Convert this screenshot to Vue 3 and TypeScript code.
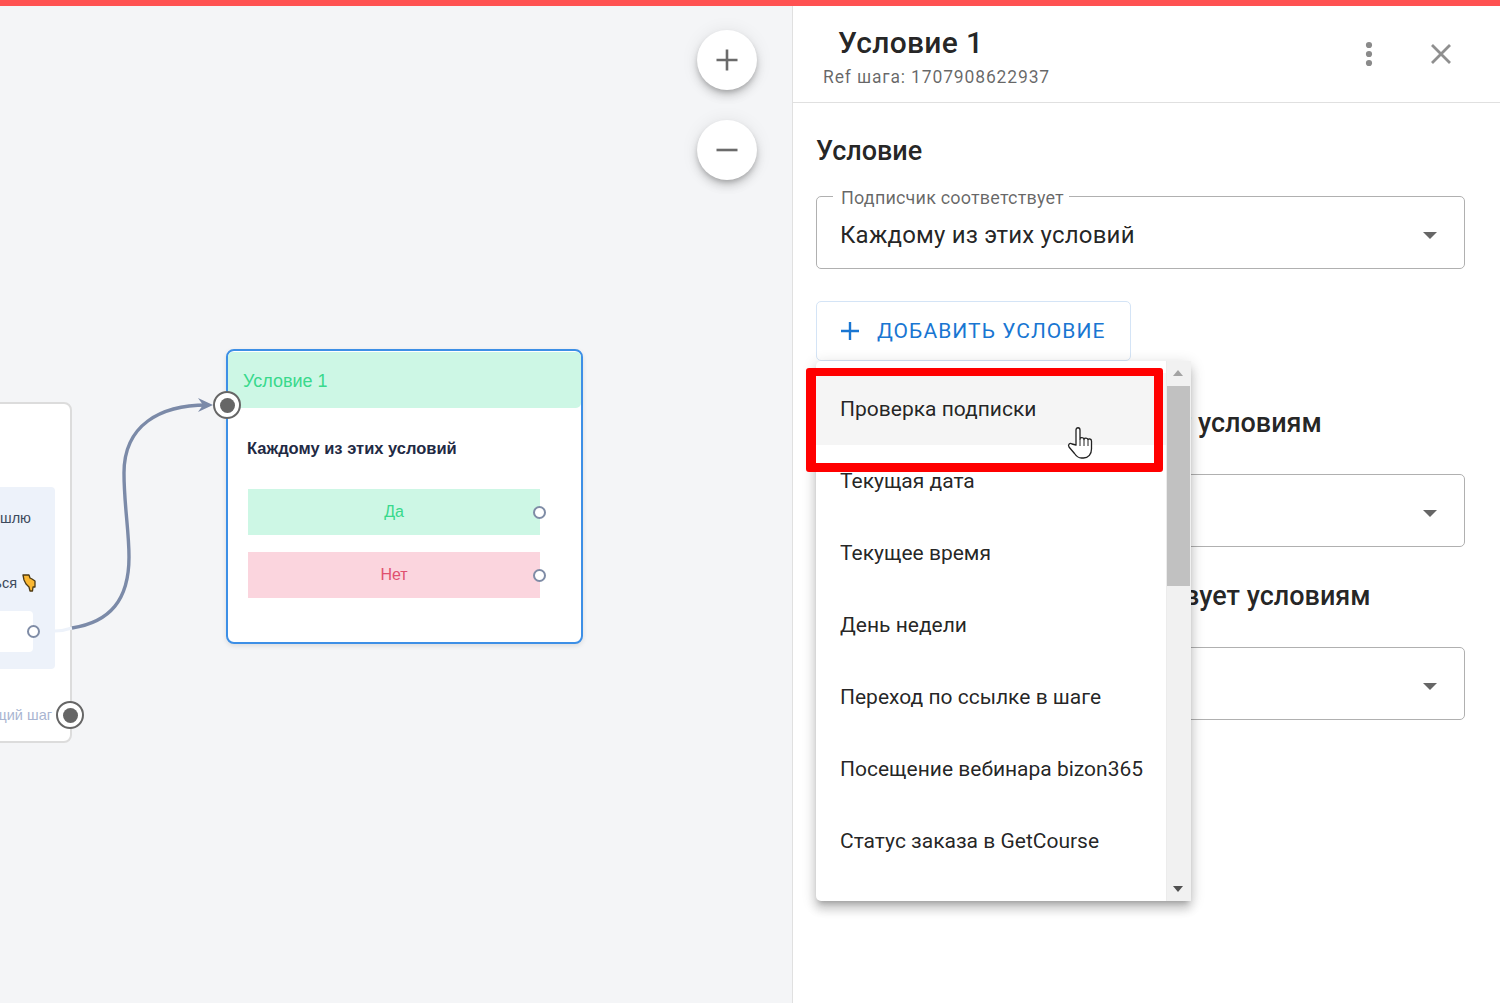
<script setup lang="ts">
const items: string[] = [
  'Проверка подписки',
  'Текущая дата',
  'Текущее время',
  'День недели',
  'Переход по ссылке в шаге',
  'Посещение вебинара bizon365',
  'Статус заказа в GetCourse',
]
</script>

<template>
  <div class="root">
    <div class="topbar"></div>
    <div class="body">
      <div class="canvas">
        <button class="zoom zoom-plus" type="button" aria-label="plus">
          <svg width="24" height="24" viewBox="0 0 24 24"><path d="M12 1.500v21M1.500 12h21" stroke="#6b6b6b" stroke-width="2.600" fill="none" /></svg>
        </button>
        <button class="zoom zoom-minus" type="button" aria-label="minus">
          <svg width="24" height="24" viewBox="0 0 24 24"><path d="M1.500 12h21" stroke="#6b6b6b" stroke-width="2.600" fill="none" /></svg>
        </button>

        <div class="node-left">
          <div class="inner">
            <div class="msg msg1">Сейчас вышлю</div>
            <div class="msg msg2">
              <span>Подписаться</span>
              <svg class="emoji" width="14" height="18" viewBox="0 0 14 18">
                <path d="M1 1h6l1 3 2 1 3 2v6h-2l-.5 4H8l-1-4-3-3-2-4z" fill="#fbb832" stroke="#4d3a12" stroke-width="1.300" stroke-linejoin="round" />
              </svg>
            </div>
            <div class="inner-btn"></div>
            <span class="port-small port-inner"></span>
          </div>
          <div class="next">Следующий шаг</div>
          <span class="port-big port-next"><i></i></span>
        </div>

        <svg class="edge" width="792" height="997" viewBox="0 0 792 997">
          <path d="M55 625C60 625 66 624 72 622" fill="none" stroke="#edf2fa" stroke-width="3" />
          <path d="M72 622C110 616 129 594 129 551C129 524 124 499 124 467C124 419 160 399 207 399" fill="none" stroke="#7b8aa8" stroke-width="3.400" />
          <path d="M213 399 198 392 203 399 198 406z" fill="#7b8aa8" />
        </svg>

        <div class="node">
          <div class="node-head">Условие 1</div>
          <div class="node-body">
            <div class="node-title">Каждому из этих условий</div>
            <div class="answer yes">Да<span class="port-small port-answer"></span></div>
            <div class="answer no">Нет<span class="port-small port-answer"></span></div>
          </div>
          <span class="port-big port-in"><i></i></span>
        </div>
      </div>

      <aside class="panel">
        <header class="panel-head">
          <div class="head-text">
            <div class="title">Условие 1</div>
            <div class="ref">Ref шага: 1707908622937</div>
          </div>
          <svg class="kebab" width="8" height="26" viewBox="0 0 8 26">
            <circle cx="4" cy="4" r="3.100" fill="#8a8a8a" /><circle cx="4" cy="13" r="3.100" fill="#8a8a8a" /><circle cx="4" cy="22" r="3.100" fill="#8a8a8a" />
          </svg>
          <svg class="close" width="22" height="22" viewBox="0 0 22 22">
            <path d="M2 2l18 18M20 2 2 20" stroke="#8f8f8f" stroke-width="2.800" fill="none" />
          </svg>
        </header>

        <div class="content">
          <h2 class="h h1">Условие</h2>
          <div class="select s1">
            <span class="label">Подписчик соответствует</span>
            <span class="value">Каждому из этих условий</span>
            <i class="caret"></i>
          </div>
          <button class="add" type="button">
            <svg width="20" height="20" viewBox="0 0 20 20"><path d="M10 1v18M1 10h18" stroke="#1976d2" stroke-width="2.400" fill="none" /></svg>
            <span>Добавить условие</span>
          </button>
          <h2 class="h h2">Да: подписчик соответствует условиям</h2>
          <div class="select s2"><i class="caret"></i></div>
          <h2 class="h h3">Нет: подписчик не соответствует условиям</h2>
          <div class="select s3"><i class="caret"></i></div>
        </div>

        <div class="menu">
          <ul class="list">
            <li v-for="(item, i) in items" :key="item" class="item" :class="{ hover: i === 0 }">{{ item }}</li>
          </ul>
          <div class="scrollbar">
            <i class="arrow up"></i>
            <div class="thumb"></div>
            <i class="arrow down"></i>
          </div>
        </div>

        <div class="highlight"></div>
        <svg class="hand" width="26" height="34" viewBox="0 0 26 34">
          <path d="M9 19V4c0-3 4-3 4 0v9c0-2 4-2 4 .5 0-2 4-2 4 .5 0-1.500 3.500-1.500 3.500 1V23c0 5-3 9-8 9h-2c-3.500 0-5-1.500-7-4.500L2 21c-1.500-2.500 1-4.500 3-3z" fill="#fff" stroke="#222" stroke-width="1.300" stroke-linejoin="round" />
          <path d="M13 13v7M17 13.500V20M21 14.500V20" stroke="#222" stroke-width="1" fill="none" />
        </svg>
      </aside>
    </div>
  </div>
</template>

<style scoped>
.root {
  width: 1500px;
  height: 1003px;
  display: flex;
  flex-direction: column;
  overflow: hidden;
  font-family: Roboto, "Liberation Sans", sans-serif;
  background: #fff;
}
.topbar {
  height: 6px;
  flex: none;
  background: #ff5252;
}
.body {
  flex: 1;
  display: flex;
  min-height: 0;
}
.canvas {
  flex: 0 0 792px;
  position: relative;
  overflow: hidden;
  background: #f4f5f7;
  font-family: "Liberation Sans", Arial, sans-serif;
}
.zoom {
  position: absolute;
  left: 697px;
  width: 60px;
  height: 60px;
  border: 0;
  padding: 0;
  border-radius: 50%;
  background: #fff;
  display: flex;
  align-items: center;
  justify-content: center;
  box-shadow: 0 3px 5px -1px rgba(0, 0, 0, .2), 0 6px 10px 0 rgba(0, 0, 0, .14), 0 1px 18px 0 rgba(0, 0, 0, .08);
}
.zoom-plus { top: 24px; }
.zoom-minus { top: 114px; }

.edge {
  position: absolute;
  left: 0;
  top: 0;
  pointer-events: none;
}

.node-left {
  position: absolute;
  left: -229px;
  top: 396px;
  width: 301px;
  height: 341px;
  box-sizing: border-box;
  background: #fff;
  border: 2px solid #dcdcdc;
  border-radius: 8px;
}
.inner {
  position: absolute;
  left: 20px;
  right: 15px;
  top: 83px;
  height: 182px;
  background: #edf2fa;
  border-radius: 4px;
}
.msg {
  position: absolute;
  right: 24px;
  font-size: 14.500px;
  line-height: 18px;
  color: #3d4a5c;
  white-space: nowrap;
  display: flex;
  align-items: center;
  gap: 5px;
}
.msg1 { top: 22px; }
.msg2 { top: 87px; right: 19px; }
.emoji { flex: none; }
.inner-btn {
  position: absolute;
  left: 20px;
  right: 22px;
  top: 124px;
  height: 41px;
  background: #fff;
  border-radius: 4px;
}
.port-small {
  position: absolute;
  width: 13px;
  height: 13px;
  box-sizing: border-box;
  border-radius: 50%;
  background: #fff;
  border: 2px solid #7f8ca6;
}
.port-inner {
  right: 15px;
  top: 138px;
}
.next {
  position: absolute;
  right: 18px;
  top: 302px;
  font-size: 14.500px;
  line-height: 18px;
  color: #a9b5d1;
  white-space: nowrap;
}
.port-big {
  position: absolute;
  width: 28px;
  height: 28px;
  box-sizing: border-box;
  border-radius: 50%;
  background: #fff;
  border: 2px solid #666;
  display: flex;
  align-items: center;
  justify-content: center;
}
.port-big i {
  width: 15px;
  height: 15px;
  border-radius: 50%;
  background: #666;
}
.port-next {
  right: -14px;
  top: 297px;
}

.node {
  position: absolute;
  left: 226px;
  top: 343px;
  width: 357px;
  height: 295px;
  box-sizing: border-box;
  background: #fff;
  border: 2px solid #3d8fe6;
  border-radius: 8px;
  box-shadow: 0 2px 5px rgba(0, 0, 0, .1);
}
.node-head {
  height: 56px;
  margin: 1px 0 0;
  padding: 0 0 0 15px;
  box-sizing: border-box;
  background: #cdf7e5;
  border-radius: 5px;
  color: #38d98c;
  font-size: 18px;
  line-height: 58px;
}
.node-body {
  padding: 0 41px 0 20px;
}
.node-title {
  margin-top: 30px;
  margin-left: -1px;
  font-size: 16.500px;
  line-height: 20px;
  font-weight: 700;
  color: #1f2a44;
}
.answer {
  position: relative;
  height: 46px;
  text-align: center;
  font-size: 16px;
  line-height: 46px;
}
.yes {
  margin-top: 31px;
  background: #cdf7e5;
  color: #38d98c;
}
.no {
  margin-top: 17px;
  background: #fbd5de;
  color: #e0506f;
}
.port-answer {
  right: -6px;
  top: 17px;
}
.port-in {
  left: -15px;
  top: 40px;
}

.panel {
  flex: 1;
  position: relative;
  box-sizing: border-box;
  background: #fff;
  border-left: 1px solid #e0e0e0;
  color: rgba(0, 0, 0, .87);
}
.panel-head {
  height: 97px;
  box-sizing: border-box;
  display: flex;
  align-items: center;
  padding: 0 48px 0 30px;
  border-bottom: 1px solid #e0e0e0;
}
.head-text {
  flex: 1;
  margin-top: 3px;
}
.title {
  margin-left: 15px;
  font-size: 30px;
  line-height: 40px;
  font-weight: 500;
  letter-spacing: .3px;
}
.ref {
  margin-top: 2px;
  font-size: 17.500px;
  line-height: 24px;
  letter-spacing: .85px;
  color: rgba(0, 0, 0, .6);
}
.kebab {
  flex: none;
  margin-right: 57px;
}
.close {
  flex: none;
}
.content {
  padding: 0 35px 0 23px;
}
.h {
  margin: 0;
  font-size: 27px;
  line-height: 32px;
  font-weight: 500;
  white-space: nowrap;
}
.h1 { margin-top: 32px; }
.h2 { margin-top: 46px; }
.h3 { margin-top: 33px; }
.select {
  position: relative;
  height: 73px;
  box-sizing: border-box;
  margin-top: 29px;
  border: 1px solid #b0b0b0;
  border-radius: 5px;
  display: flex;
  align-items: center;
  padding: 11px 23px 7px;
}
.s2, .s3 { margin-top: 35px; }
.label {
  position: absolute;
  left: 16px;
  top: -10px;
  padding: 0 5px 0 8px;
  background: #fff;
  font-size: 18px;
  line-height: 22px;
  letter-spacing: .18px;
  color: rgba(0, 0, 0, .6);
  white-space: nowrap;
}
.value {
  font-size: 24px;
  line-height: 30px;
  letter-spacing: .2px;
}
.caret {
  position: absolute;
  right: 27px;
  top: 35px;
  width: 0;
  height: 0;
  border-left: 7px solid transparent;
  border-right: 7px solid transparent;
  border-top: 7px solid #666;
}
.add {
  margin-top: 32px;
  width: 315px;
  height: 60px;
  box-sizing: border-box;
  display: flex;
  align-items: center;
  gap: 17px;
  padding: 0 0 0 23px;
  background: #fff;
  border: 1px solid #d4e4f6;
  border-radius: 5px;
  color: #1976d2;
  font-family: inherit;
  font-size: 21px;
  font-weight: 400;
  letter-spacing: 1.050px;
  text-transform: uppercase;
}

.menu {
  position: absolute;
  left: 23px;
  top: 355px;
  width: 375px;
  height: 540px;
  display: flex;
  background: #fff;
  border-radius: 5px;
  box-shadow: 0 5px 5px -3px rgba(0, 0, 0, .2), 0 8px 10px 1px rgba(0, 0, 0, .14), 0 3px 14px 2px rgba(0, 0, 0, .12);
}
.list {
  flex: 1;
  list-style: none;
  margin: 0;
  padding: 12px 0 0;
}
.item {
  height: 72px;
  box-sizing: border-box;
  padding: 0 10px 0 24px;
  display: flex;
  align-items: center;
  font-size: 21px;
  white-space: nowrap;
}
.hover {
  background: #f5f5f5;
}
.scrollbar {
  flex: 0 0 25px;
  position: relative;
  background: #f1f1f1;
  border-left: 1px solid #ececec;
  box-sizing: border-box;
}
.thumb {
  position: absolute;
  left: 0;
  right: 1px;
  top: 25px;
  height: 200px;
  background: #c1c1c1;
}
.arrow {
  position: absolute;
  left: 6px;
  width: 0;
  height: 0;
  border-left: 5.500px solid transparent;
  border-right: 5.500px solid transparent;
}
.up {
  top: 9px;
  border-bottom: 6px solid #a3a3a3;
}
.down {
  bottom: 9px;
  border-top: 6px solid #505050;
}
.highlight {
  position: absolute;
  left: 13px;
  top: 362px;
  width: 357px;
  height: 104px;
  box-sizing: border-box;
  border: solid #ff0000;
  border-width: 8px 9px 9px 10px;
  border-radius: 3px;
}
.hand {
  position: absolute;
  left: 274px;
  top: 420px;
}
</style>

<style>
html, body {
  margin: 0;
  background: #fff;
}
</style>
